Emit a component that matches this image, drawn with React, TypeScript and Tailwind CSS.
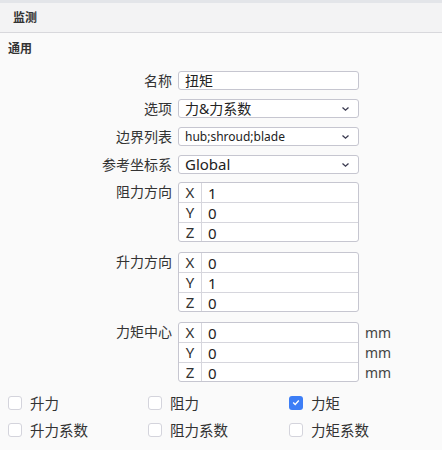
import React from "react";

const font = { fontFamily: '"Noto Sans", "Noto Sans CJK SC", sans-serif' };

function Chevron() {
  return (
    <svg width="9" height="6" viewBox="0 0 9 6" className="absolute right-[9px] top-[7px]">
      <path d="M1.5 1.5 L4.5 4.2 L7.5 1.5" fill="none" stroke="#3a3a50" strokeWidth="1.3" />
    </svg>
  );
}

function Row({ label, children }: { label: string; children: React.ReactNode }) {
  return (
    <div className="flex items-center h-[19px]">
      <div className="w-[164px] text-right text-[14px] leading-[19px] text-[#333] whitespace-nowrap">{label}</div>
      <div className="ml-[6px] w-[181px] h-[19px] relative">{children}</div>
    </div>
  );
}

function Box({ children, size = "text-[14px]" }: { children: React.ReactNode; size?: string }) {
  return (
    <div className={`h-full w-full border border-[#c6c6d0] rounded-[3px] bg-white pl-[6px] flex items-center ${size} text-[#222] leading-none`}>
      {children}
    </div>
  );
}

function Vec({ label, values, unit }: { label: string; values: string[]; unit?: string }) {
  const axes = ["X", "Y", "Z"];
  return (
    <div className="flex items-start">
      <div className="w-[164px] text-right text-[14px] leading-[20px] text-[#333] whitespace-nowrap">{label}</div>
      <div className="ml-[6px] w-[181px] border border-[#c6c6d0] rounded-[3px] bg-white">
        {axes.map((a, i) => (
          <div key={a} className={`flex h-[19.33px] ${i > 0 ? "border-t border-[#d6d6dd]" : ""}`}>
            <div className="w-[23px] border-r border-[#d6d6dd] text-center text-[15px] leading-[19px] text-[#333]">{a}</div>
            <div className="pl-[6px] text-[15px] leading-[20px] text-[#222]">{values[i]}</div>
          </div>
        ))}
      </div>
      {unit && (
        <div className="ml-[6px] flex flex-col">
          {axes.map((a) => (
            <div key={a} className="h-[20px] leading-[22px] text-[14px] text-[#444]">{unit}</div>
          ))}
        </div>
      )}
    </div>
  );
}

function Check({ label, checked }: { label: string; checked?: boolean }) {
  return (
    <div className="flex items-center h-[14px]">
      {checked ? (
        <div className="w-[14px] h-[14px] rounded-[3px] bg-[#3d7ef6] flex items-center justify-center">
          <svg width="8" height="7" viewBox="0 0 8 7">
            <path d="M1.2 3.6 L3.2 5.4 L6.8 1.6" fill="none" stroke="white" strokeWidth="1.4" />
          </svg>
        </div>
      ) : (
        <div className="w-[14px] h-[14px] rounded-[3px] bg-white border border-[#d4d4dc]" />
      )}
      <span className="ml-[8px] text-[14.5px] text-[#333] leading-none">{label}</span>
    </div>
  );
}

export default function App() {
  return (
    <div className="w-[442px] h-[450px] bg-[#fafafa] overflow-hidden" style={font}>
      <div className="h-[3px] bg-[#e3e5e9]" />
      <div className="h-[30px] bg-[#f3f3f4] border-b border-[#d8d8dc] flex items-center pl-[13px]">
        <span className="text-[12px] font-bold text-[#333]">监测</span>
      </div>
      <div className="pl-[8px] pt-[8px] h-[16px] box-content text-[12px] font-bold text-[#333] leading-[16px]">通用</div>
      <div className="pl-[8px] mt-[14px] flex flex-col gap-[9px]">
        <Row label="名称">
          <Box>扭矩</Box>
        </Row>
        <Row label="选项">
          <Box>力&amp;力系数</Box>
          <Chevron />
        </Row>
        <Row label="边界列表">
          <Box size="text-[12px]">hub;shroud;blade</Box>
          <Chevron />
        </Row>
        <Row label="参考坐标系">
          <Box size="text-[15px]">Global</Box>
          <Chevron />
        </Row>
      </div>
      <div className="pl-[8px] mt-[8px] flex flex-col gap-[10px]">
        <Vec label="阻力方向" values={["1", "0", "0"]} />
        <Vec label="升力方向" values={["0", "1", "0"]} />
        <Vec label="力矩中心" values={["0", "0", "0"]} unit="mm" />
      </div>
      <div className="pl-[8px] mt-[14px] grid grid-cols-[140px_141px_1fr] gap-y-[13px]">
        <Check label="升力" />
        <Check label="阻力" />
        <Check label="力矩" checked />
        <Check label="升力系数" />
        <Check label="阻力系数" />
        <Check label="力矩系数" />
      </div>
    </div>
  );
}
